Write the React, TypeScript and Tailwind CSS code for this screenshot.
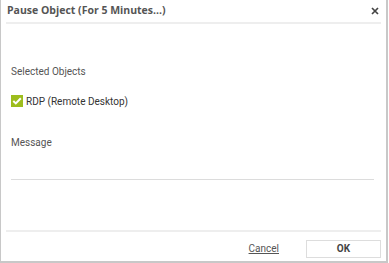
import React from 'react';

export default function App() {
  return (
    <div className="w-[388px] h-[263px] bg-white flex flex-col border-l border-r-2 border-b-2 border-[#c8c8c8] font-['Roboto',sans-serif]">
      {/* header */}
      <div className="mx-[5px] h-[24px] flex items-center justify-between border-b-2 border-[#eeeeee] pb-[1px]">
        <span className="pl-[1px] text-[10.5px] font-bold text-[#555] font-['Open_Sans',sans-serif] leading-none">
          Pause Object (For 5 Minutes...)
        </span>
        <svg width="8" height="8" viewBox="0 0 8 8" className="mr-[2px]">
          <path d="M1 1L7 7M7 1L1 7" stroke="#444" strokeWidth="1.7" />
        </svg>
      </div>

      <div className="flex-1 px-[10px] pt-[42px]">
        <div className="h-[12px] flex items-center text-[10px] text-[#555] leading-none">Selected Objects</div>
        <label className="mt-[16px] h-[13px] flex items-center gap-[3px]">
          <span className="w-[12px] h-[12px] bg-[#9dbd1d] flex items-center justify-center">
            <svg width="10" height="8" viewBox="0 0 10 8">
              <path d="M1.3 4L3.8 6.4L8.8 1.2" stroke="#fff" strokeWidth="2" fill="none" />
            </svg>
          </span>
          <span className="text-[10px] text-[#333] leading-none pt-[2px]">RDP (Remote Desktop)</span>
        </label>

        <div className="mt-[30px] h-[12px] flex items-center text-[10px] text-[#555] leading-none">Message</div>
        <div className="mt-[30px] mr-[2px] border-b border-[#dcdcdc] h-0"></div>
      </div>

      {/* footer */}
      <div className="mx-[5px] border-t-2 border-[#eeeeee] h-[31px] flex items-start justify-end gap-[27px] pt-[8px]">
        <button className="h-[18px] text-[10px] text-[#555] underline leading-none">Cancel</button>
        <button className="w-[75px] h-[18px] border border-[#dddddd] text-[10px] font-bold text-[#444] leading-none">
          OK
        </button>
      </div>
    </div>
  );
}
